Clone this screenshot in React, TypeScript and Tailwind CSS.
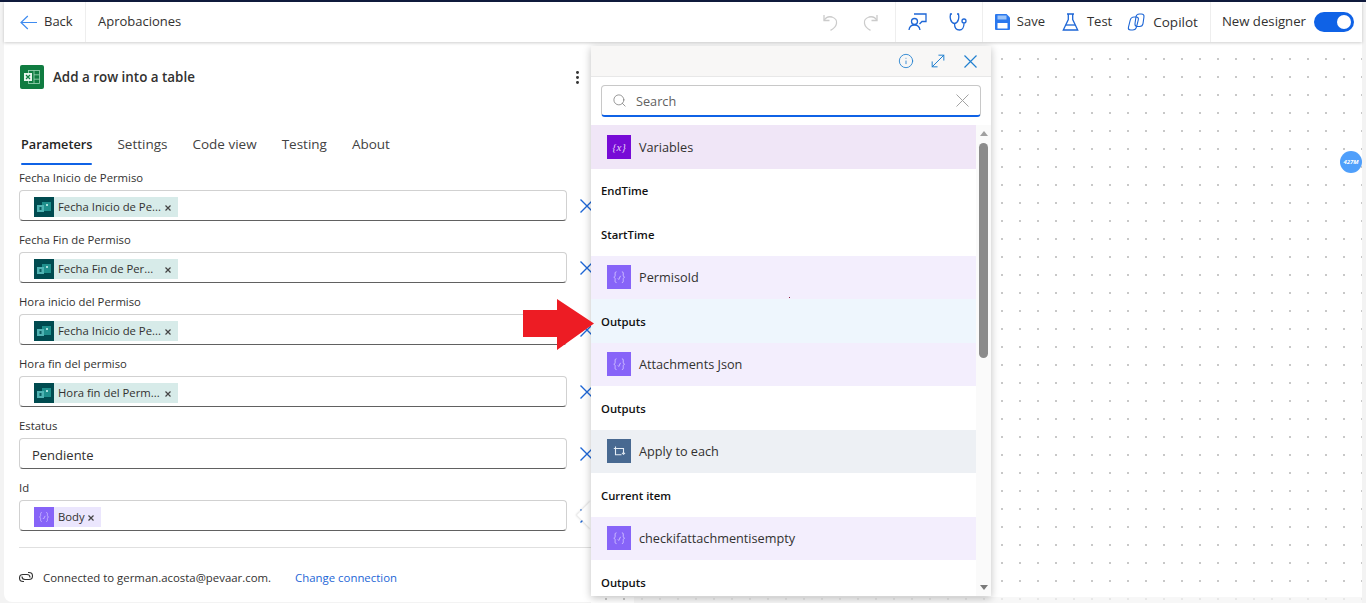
import type { ReactNode } from "react";
import { Info, MoveDiagonal, Search, EllipsisVertical } from "lucide-react";

const font = { fontFamily: '"Open Sans", "Noto Sans", sans-serif' };

function Divider() {
  return <div className="h-10 w-px bg-[#eeeeee]" />;
}

function Cross({ size, color, stroke = 1.2 }: { size: number; color: string; stroke?: number }) {
  return (
    <svg width={size} height={size} viewBox={`0 0 ${size} ${size}`} className="shrink-0" stroke={color} strokeWidth={stroke} fill="none">
      <path d={`M0.500 0.500L${size - 0.5} ${size - 0.5}M${size - 0.5} 0.500L0.500 ${size - 0.5}`} />
    </svg>
  );
}

function BackArrow() {
  return (
    <svg width="17" height="15" viewBox="0 0 17 15" fill="none" stroke="#3f8cf0" strokeWidth="1.200">
      <path d="M1 7.500h16M7.800 1L1 7.500 7.800 14" />
    </svg>
  );
}

function UndoIcon({ flip }: { flip?: boolean }) {
  return (
    <svg width="15" height="17" viewBox="0 0 15 17" fill="none" stroke="#cbcbcb" strokeWidth="1.300" className={flip ? "-scale-x-100" : ""}>
      <path d="M1 1v5.500h5.500" />
      <path d="M1.200 6.300C3 3 6 2.300 9 3c3.500 1 5 4 4.500 6.500C13 12.500 10 15 7.500 16.300" />
    </svg>
  );
}

function ReviewIcon() {
  return (
    <svg width="19" height="18" viewBox="0 0 19 18" fill="none" stroke="#1d66d6" strokeWidth="1.300">
      <circle cx="6.500" cy="8.500" r="3" />
      <path d="M1 17c.3-3 2-5 5.500-5s5 2 5.500 5" />
      <path d="M6 1h12v7.500h-4l-2.500 2.500" />
    </svg>
  );
}

function StethoIcon() {
  return (
    <svg width="18" height="18" viewBox="0 0 18 18" fill="none" stroke="#1d66d6" strokeWidth="1.300">
      <path d="M3 1H1.500C.8 4 1 9.500 5.500 10.500 10 9.500 10.200 4 9.500 1H8" />
      <path d="M5.500 10.500c0 4.500 2.500 6.500 5 6.500s4.500-2.500 4.500-6.500" />
      <circle cx="15" cy="8" r="2" />
    </svg>
  );
}

function SaveIcon() {
  return (
    <svg width="15" height="16" viewBox="0 0 15 16">
      <path d="M0 1a1 1 0 0 1 1-1h10.500L15 3.500V15a1 1 0 0 1-1 1H1a1 1 0 0 1-1-1z" fill="#2a78ee" />
      <rect x="2.500" y="1.500" width="9" height="4" fill="#9cc4f8" />
      <rect x="2.500" y="9" width="10" height="5.500" fill="#ffffff" />
    </svg>
  );
}

function FlaskIcon() {
  return (
    <svg width="17" height="18" viewBox="0 0 17 18" fill="none" stroke="#1d66d6" strokeWidth="1.300">
      <path d="M5 1h7M6.300 1v5.500L1.300 17h14.400l-5-10.500V1" />
      <path d="M4 12h9" />
    </svg>
  );
}

function CopilotIcon() {
  return (
    <svg width="18" height="18" viewBox="0 0 18 18" fill="none" stroke="#1d66d6" strokeWidth="1.100">
      <rect x="5" y="4" width="8" height="13" rx="3" transform="skewX(-14)" />
      <rect x="9.500" y="1" width="8" height="12.500" rx="3" transform="skewX(-8)" />
    </svg>
  );
}

function ExcelIcon() {
  return (
    <div className="ml-px flex h-6 w-6 items-center justify-center rounded-[2px] bg-[#107c41]">
      <svg width="16" height="14" viewBox="0 0 16 14" fill="none">
        <rect x="4.500" y="0.500" width="11" height="13" stroke="#9fd8b8" strokeWidth="0.800" />
        <path d="M10 .5v13M10 4.800h5.500M10 9.200h5.500" stroke="#9fd8b8" strokeWidth="0.800" />
        <rect x="0" y="3" width="8" height="8" fill="#e8f6ee" />
        <path d="M2 5l4 4M6 5l-4 4" stroke="#107c41" strokeWidth="1.200" />
      </svg>
    </div>
  );
}

function VarGlyph({ size = 24 }: { size?: number }) {
  return (
    <div className="flex shrink-0 items-center justify-center bg-[#8764f8]" style={{ width: size, height: size }}>
      <svg width={size * 0.6} height={size * 0.6} viewBox="0 0 16 16" fill="none" stroke="#cdbdff" strokeWidth="1.100">
        <path d="M5 2c-2 0-1.500 2-1.500 3.500S3.300 7.500 2 8c1.300.5 1.500 1 1.500 2.500S3 14 5 14" />
        <path d="M11 2c2 0 1.500 2 1.500 3.500s.2 2 1.500 2.500c-1.300.5-1.500 1-1.500 2.500S13 14 11 14" />
        <path d="M6.500 9.500l1 1 2-4" />
      </svg>
    </div>
  );
}

function DataverseGlyph() {
  return (
    <div className="flex h-5 w-5 shrink-0 items-center justify-center bg-[#004b50]">
      <svg width="14" height="11" viewBox="0 0 14 11">
        <rect x="5" y="0" width="9" height="9" fill="#1f8f8c" />
        <rect x="0" y="3" width="7" height="7" fill="#4fb3b3" />
        <rect x="2.500" y="5" width="2" height="3" fill="#0b5c60" />
        <rect x="9" y="2" width="2" height="2" fill="#a8dedb" />
      </svg>
    </div>
  );
}

function Chip({ label, isVar }: { label: string; isVar?: boolean }) {
  return (
    <div className={`flex h-5 items-center ${isVar ? "w-[67px] bg-[#ebe6fd]" : "w-[144px] bg-[#d7ebe9]"}`}>
      {isVar ? <VarGlyph size={20} /> : <DataverseGlyph />}
      <span className="ml-[4px] mt-px flex-1 whitespace-nowrap text-[11.300px] text-[#323130]">{label}</span>
      <div className="mr-[7px] mt-px"><Cross size={6} color="#444444" /></div>
    </div>
  );
}

function Field({ label, chip, text, isVar }: { label: string; chip?: string; text?: string; isVar?: boolean }) {
  return (
    <div className="mb-[11px]">
      <div className="h-5 text-[11.300px] leading-[15px] text-[#323130]">{label}</div>
      <div className="flex items-center">
        <div className="flex h-[31px] w-[548px] shrink-0 items-center rounded-[4px] border border-[#d1d1d1] border-b-[#616161] pl-[14px] pt-[3px]">
          {chip && <Chip label={chip} isVar={isVar} />}
          {text && <span className="-ml-[2px] mt-px text-[13px] text-[#323130]">{text}</span>}
        </div>
        <div className="ml-[13px]"><Cross size={14} color="#1d66d6" stroke={1.400} /></div>
      </div>
    </div>
  );
}

function HeaderRow({ label }: { label: string }) {
  return (
    <div className="flex h-[43.500px] items-center pl-[10px] pt-[3px] text-[11.300px] font-semibold text-[#111111]">
      {label}
    </div>
  );
}

function TokenRow({ label, bg, icon }: { label: string; bg: string; icon: ReactNode }) {
  return (
    <div className="flex h-[43.500px] items-center pl-4" style={{ background: bg }}>
      {icon}
      <span className="ml-[8px] mt-px text-[12.700px] text-[#323130]">{label}</span>
    </div>
  );
}

function ExpressionIcon() {
  return (
    <div className="flex h-6 w-6 items-center justify-center bg-[#770bd6] text-[11px] italic text-[#e5d0f7]" style={{ fontFamily: '"Liberation Serif", serif' }}>
      {"{x}"}
    </div>
  );
}

function LoopIcon() {
  return (
    <div className="flex h-6 w-6 items-center justify-center bg-[#486991]">
      <svg width="13" height="11" viewBox="0 0 13 11" fill="none" stroke="#e6edf5" strokeWidth="1.100">
        <path d="M2.500 .5v1.500M.8 2.500h9.700v5M8.500 8.800H2.500V2.500" />
        <path d="M9 6.800l1.500 1.500 1.500-1.500" />
      </svg>
    </div>
  );
}

function TokenPicker() {
  return (
    <div className="absolute left-[591px] top-[46px] flex h-[550px] w-[400px] flex-col bg-white shadow-[0_2px_8px_rgba(0,0,0,0.25)]">
      <div className="flex h-[31px] items-center justify-end border-b border-[#e8e8e8] bg-[#f8f7f6] pr-[14px]">
        <Info size={16} strokeWidth={1.300} className="text-[#2180d0]" />
        <MoveDiagonal size={20} strokeWidth={1.200} className="ml-[14px] text-[#2180d0]" />
        <div className="ml-[16px]"><Cross size={13} color="#2180d0" /></div>
      </div>
      <div className="px-[10px] pt-2">
        <div className="flex h-[32px] items-center rounded-[4px] border border-[#c8c8c8] border-b-2 border-b-[#0f62e6] px-[10px] pr-[11px]">
          <Search size={15} strokeWidth={1.200} className="text-[#777777]" />
          <span className="ml-[9px] mt-[2px] flex-1 text-[12.700px] text-[#616161]">Search</span>
          <Cross size={13} color="#a3a3a3" stroke={1} />
        </div>
      </div>
      <div className="relative mt-[8px] flex-1 overflow-hidden">
        <div className="w-[385px]">
          <TokenRow label="Variables" bg="#f0e6f7" icon={<ExpressionIcon />} />
          <HeaderRow label="EndTime" />
          <HeaderRow label="StartTime" />
          <TokenRow label="PermisoId" bg="#f3eefd" icon={<VarGlyph />} />
          <div className="bg-[#eef6fd]"><HeaderRow label="Outputs" /></div>
          <TokenRow label="Attachments Json" bg="#f3eefd" icon={<VarGlyph />} />
          <HeaderRow label="Outputs" />
          <TokenRow label="Apply to each" bg="#edf0f4" icon={<LoopIcon />} />
          <HeaderRow label="Current item" />
          <TokenRow label="checkifattachmentisempty" bg="#f3eefd" icon={<VarGlyph />} />
          <HeaderRow label="Outputs" />
        </div>
        <div className="absolute right-0 top-0 flex h-full w-[15px] flex-col items-center bg-[#fafafa]">
          <div className="mt-[6px] h-0 w-0 border-x-[4px] border-b-[5px] border-x-transparent border-b-[#a0a0a0]" />
          <div className="mt-[7px] h-[215px] w-[9px] rounded-[5px] bg-[#8b8b8b]" />
          <div className="mb-[6px] mt-auto h-0 w-0 border-x-[4px] border-t-[5px] border-x-transparent border-t-[#7a7a7a]" />
        </div>
      </div>
    </div>
  );
}

export default function App() {
  return (
    <div className="relative flex h-[603px] w-[1366px] flex-col overflow-hidden bg-[#f3f3f3] pl-[4px] text-[#323130]" style={font}>
      <div className="absolute left-0 top-0 h-[2px] w-full bg-[#101b3d]" />
      <header className="relative z-10 mt-[2px] flex h-10 w-[1358px] items-center bg-white text-[13px] shadow-[0_1px_3px_rgba(0,0,0,0.2)]">
        <div className="ml-[16px]"><BackArrow /></div>
        <span className="ml-[7px] w-[41px]">Back</span>
        <Divider />
        <span className="ml-[12px]">Aprobaciones</span>
        <div className="ml-auto flex items-center">
          <UndoIcon />
          <div className="ml-[25px]"><UndoIcon flip /></div>
          <div className="ml-[17px]"><Divider /></div>
          <div className="ml-[12px]"><ReviewIcon /></div>
          <div className="ml-[22px]"><StethoIcon /></div>
          <div className="ml-[15px]"><Divider /></div>
          <div className="ml-[12px]"><SaveIcon /></div>
          <span className="ml-[7px]">Save</span>
          <div className="ml-[17px]"><FlaskIcon /></div>
          <span className="ml-[8px]">Test</span>
          <div className="ml-[15px]"><CopilotIcon /></div>
          <span className="ml-[8px] text-[13.500px]">Copilot</span>
          <div className="ml-[12px]"><Divider /></div>
          <span className="ml-[11px] text-[13.200px]">New designer</span>
          <div className="ml-[8px] mr-[8px] flex h-5 w-10 items-center justify-end rounded-full bg-[#0f62e6] pr-[3px]">
            <div className="h-[14px] w-[14px] rounded-full bg-white" />
          </div>
        </div>
      </header>

      <div className="flex flex-1">
        <main className="mb-px w-[587px] rounded-bl-lg bg-white pl-[15px]">
          <div className="mt-[22px] flex h-[26px] items-center pr-[5px]">
            <ExcelIcon />
            <h1 className="ml-[9px] mt-px flex-1 text-[13.400px] font-semibold text-[#323130]">Add a row into a table</h1>
            <EllipsisVertical size={17} strokeWidth={2.200} className="text-[#333333]" />
          </div>
          <nav className="mt-[41px] flex h-[34px] gap-[25px] pl-[2px] pt-[3px] text-[13.500px] text-[#424242]">
            <span className="relative text-[12.700px] font-semibold leading-[20px] text-[#242424]">
              Parameters
              <span className="absolute inset-x-0 bottom-0 h-[2px] rounded-full bg-[#0f62e6]" />
            </span>
            <span className="leading-[20px]">Settings</span>
            <span className="leading-[20px]">Code view</span>
            <span className="leading-[20px]">Testing</span>
            <span className="leading-[20px]">About</span>
          </nav>
          <div className="mt-[5px]">
            <Field label="Fecha Inicio de Permiso" chip="Fecha Inicio de Pe..." />
            <Field label="Fecha Fin de Permiso" chip="Fecha Fin de Per..." />
            <Field label="Hora inicio del Permiso" chip="Fecha Inicio de Pe..." />
            <Field label="Hora fin del permiso" chip="Hora fin del Perm..." />
            <Field label="Estatus" text="Pendiente" />
            <Field label="Id" chip="Body" isVar />
          </div>
          <div className="mt-[16px] border-t border-[#e0e0e0]" />
          <div className="mt-[20px] flex items-center text-[11.400px]">
            <svg width="14" height="12" viewBox="0 0 14 12" fill="none" stroke="#333333" strokeWidth="1.100">
              <path d="M5 10.500H4a3.500 3.500 0 0 1 0-7h4a3 3 0 0 1 3 3" />
              <path d="M9 1.500h1a3.500 3.500 0 0 1 0 7H6a3 3 0 0 1-3-3" />
            </svg>
            <span className="ml-[10px]">Connected to german.acosta@pevaar.com.</span>
            <span className="ml-[24px] mt-px text-[#1d66d6]">Change connection</span>
          </div>
        </main>

        <div className="flex w-[771px] flex-col justify-end bg-white bg-[radial-gradient(circle,#c4c4c4_0.7px,transparent_0.8px)] bg-[length:18px_18px] bg-[position:6px_8px]">
          <div className="ml-[43px] h-[6px] bg-[#f3f3f3]/70" />
        </div>
      </div>

      <div className="absolute left-[581px] top-[505px] h-[20px] w-[20px] rotate-45 bg-white shadow-[-1px_1px_2px_rgba(0,0,0,0.12)]" />

      <TokenPicker />

      <svg className="absolute left-[523px] top-[298px]" width="72" height="54" viewBox="0 0 72 54">
        <path d="M0 12h34V1l37 24.500L34 52V39H0z" fill="#ed1c24" />
      </svg>

      <div className="absolute left-[789px] top-[297px] h-px w-px bg-[#8a2040]" />

      <div className="absolute left-[1340px] top-[151px] flex h-[22px] w-[22px] items-center justify-center rounded-full bg-[#4f9ffb] text-[6px] font-bold italic text-white">
        427M
      </div>
    </div>
  );
}
